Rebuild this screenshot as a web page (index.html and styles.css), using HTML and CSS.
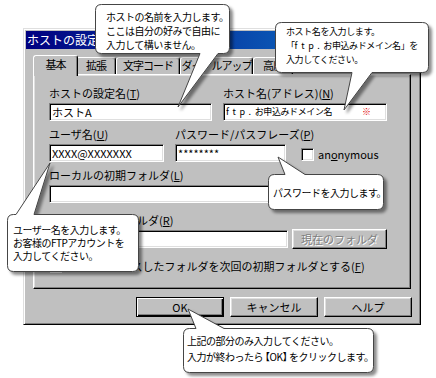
FILE: index.html
```html
<!DOCTYPE html>
<html>
<head>
<meta charset="utf-8">
<link rel="stylesheet" href="styles.css">
</head>
<body>

<div class="dialog">
  <div class="titlebar">ホストの設定</div>
  <div class="tabs">
    <div class="tab active t-basic">基本</div>
    <div class="tab t-ext">拡張</div>
    <div class="tab t-code">文字コード</div>
    <div class="tab t-dial">ダイアルアップ</div>
    <div class="tab t-adv">高度</div>
  </div>
  <div class="panel">
    <div class="row">
      <div class="field host-name">
        <div class="label">ホストの設定名(<u>T</u>)</div>
        <div class="input">ホストA</div>
      </div>
      <div class="field host-addr">
        <div class="label">ホスト名(アドレス)(<u>N</u>)</div>
        <div class="input wide"><span class="latin">ftp.</span>お申込みドメイン名<span class="mark">※</span></div>
      </div>
    </div>
    <div class="row">
      <div class="field user">
        <div class="label">ユーザ名(<u>U</u>)</div>
        <div class="input">XXXX@XXXXXXX</div>
      </div>
      <div class="field pass">
        <div class="label">パスワード/パスフレーズ(<u>P</u>)</div>
        <div class="input">********</div>
      </div>
      <div class="check-item anon"><span class="check"></span>an<u>o</u>nymous</div>
    </div>
    <div class="row row-local">
      <div class="field folder">
        <div class="label">ローカルの初期フォルダ(<u>L</u>)</div>
        <div class="input"></div>
      </div>
    </div>
    <div class="row row-remote">
      <div class="field folder">
        <div class="label">ホストの初期フォルダ(<u>R</u>)</div>
        <div class="input"></div>
      </div>
      <div class="btn disabled">現在のフォルダ</div>
    </div>
    <div class="check-item last-dir"><span class="check"></span>最後にアクセスしたフォルダを次回の初期フォルダとする(<u>F</u>)</div>
  </div>
  <div class="buttons">
    <div class="btn default">OK</div>
    <div class="btn">キャンセル</div>
    <div class="btn">ヘルプ</div>
  </div>
</div>

<!-- balloons drawn over the dialog -->
<svg class="balloons" width="436" height="378" viewBox="0 0 436 378">
  <defs>
    <filter id="shade" x="-10%" y="-10%" width="130%" height="130%">
      <feDropShadow dx="3" dy="3" stdDeviation="1.6" flood-color="#000" flood-opacity="0.45"/>
    </filter>
  </defs>
  <g fill="#fff" stroke="#444" stroke-width="1" filter="url(#shade)">
    <path d="M101.5,4.5 H223.5 Q229.5,4.5 229.5,10.5 V47.5 Q229.5,53.5 223.5,53.5 H218 L178,107 L200,53.5 H101.5 Q95.5,53.5 95.5,47.5 V10.5 Q95.5,4.5 101.5,4.5 Z"/>
    <path d="M281.5,22.5 H422.5 Q428.5,22.5 428.5,28.5 V66.5 Q428.5,72.5 422.5,72.5 H372 L344,110 L352,72.5 H281.5 Q275.5,72.5 275.5,66.5 V28.5 Q275.5,22.5 281.5,22.5 Z"/>
    <path d="M13.5,214.5 H16 L50,163 L34,214.5 H132.5 Q138.5,214.5 138.5,220.5 V265.5 Q138.5,271.5 132.5,271.5 H13.5 Q7.5,271.5 7.5,265.5 V220.5 Q7.5,214.5 13.5,214.5 Z"/>
    <path d="M274.5,174.5 H285 L278,157 L305,174.5 H377.5 Q383.5,174.5 383.5,180.5 V203.5 Q383.5,209.5 377.5,209.5 H274.5 Q268.5,209.5 268.5,203.5 V180.5 Q268.5,174.5 274.5,174.5 Z"/>
    <path d="M189.5,328.5 H196 L188,309 L224,328.5 H367.5 Q373.5,328.5 373.5,334.5 V366.5 Q373.5,372.5 367.5,372.5 H189.5 Q183.5,372.5 183.5,366.5 V334.5 Q183.5,328.5 189.5,328.5 Z"/>
  </g>
</svg>

<div class="note note-name">ホストの名前を入力します。<br>ここは自分の好みで自由に<br>入力して構いません。</div>
<div class="note note-host wide">ホスト名を入力します。<br>「<span class="latin">ftp.</span>お申込みドメイン名」を<br>入力してください。</div>
<div class="note note-user">ユーザー名を入力します。<br>お客様のFTPアカウントを<br>入力してください。</div>
<div class="note note-pass">パスワードを入力します。</div>
<div class="note note-ok">上記の部分のみ入力してください。<br>入力が終わったら<span class="narrow">【OK】</span>をクリックします。</div>

</body>
</html>
```

FILE: styles.css
```css
* {
  box-sizing: border-box;
}

body {
  margin: 0;
  width: 436px;
  height: 378px;
  position: relative;
  overflow: hidden;
  background: #fff;
  color: #000;
  font-family: "Noto Sans CJK JP", "Noto Sans", sans-serif;
  font-size: 11px;
}

u {
  text-decoration: underline;
  text-underline-offset: 1px;
}

/* window */
.dialog {
  margin: 28px 0 0 23px;
  width: 398px;
  height: 297px;
  padding: 2px;
  background: #c0c0c0;
  border: 1px solid;
  border-color: #dfdfdf #000 #000 #dfdfdf;
  box-shadow: inset 1px 1px #fff, inset -1px -1px #808080;
}

.titlebar {
  height: 18px;
  padding-left: 1px;
  line-height: 18px;
  font-size: 12px;
  color: #fff;
  background: linear-gradient(to right, #000080, #1084d0);
}

/* tabs */
.tabs {
  display: flex;
  align-items: flex-end;
  height: 19px;
  margin: 6px 0 0 9px;
  position: relative;
}

.tab {
  height: 17px;
  line-height: 15px;
  text-align: center;
  letter-spacing: -1px;
  border: 1px solid;
  border-bottom: none;
  border-color: #fff #000 transparent #fff;
  border-radius: 3px 3px 0 0;
  box-shadow: inset -1px 0 #808080;
  white-space: nowrap;
}

.tab.active {
  height: 21px;
  margin: 0 -2px -2px;
  line-height: 17px;
  background: #c0c0c0;
  position: relative;
}

.t-basic { width: 45px; }
.t-ext { width: 40px; }
.t-code { width: 64px; }
.t-dial { width: 73px; }
.t-adv { width: 40px; }

.panel {
  height: 215px;
  margin: 0 7px;
  padding: 11px 15px 0;
  border: 1px solid;
  border-color: #fff #000 #000 #fff;
  box-shadow: inset -1px -1px #808080, inset 1px 1px #dfdfdf;
}

/* form rows */
.row {
  display: flex;
  align-items: flex-end;
  gap: 11px;
  margin-bottom: 6px;
}

.row-local {
  margin-bottom: 10px;
}

.row-remote {
  gap: 4px;
}

.label {
  line-height: 14px;
  margin-bottom: 3px;
  white-space: nowrap;
}

.input {
  height: 18px;
  padding-left: 2px;
  line-height: 16px;
  background: #fff;
  white-space: nowrap;
  overflow: hidden;
  border: 1px solid;
  border-color: #808080 #fff #fff #808080;
  box-shadow: inset 1px 1px #000, inset -1px -1px #dfdfdf;
}

.host-name { width: 163px; }
.host-addr { width: 164px; }
.user { width: 115px; }
.pass { width: 111px; }
.folder { width: 239px; }

.wide {
  font-size: 9px;
  letter-spacing: -0.4px;
}

.wide .latin {
  letter-spacing: 3.6px;
}

.mark {
  margin-left: 30px;
  color: #e00000;
}

.check-item {
  display: flex;
  align-items: center;
  height: 14px;
  white-space: nowrap;
}

.check {
  width: 13px;
  height: 13px;
  margin-right: 4px;
  background: #fff;
  border: 1px solid;
  border-color: #808080 #fff #fff #808080;
  box-shadow: inset 1px 1px #000, inset -1px -1px #dfdfdf;
}

.anon {
  margin: 0 0 1px 4px;
}

.last-dir {
  margin-top: 11px;
}

/* push buttons */
.buttons {
  display: flex;
  justify-content: flex-end;
  gap: 6px;
  margin: 8px 6px 0 0;
}

.btn {
  width: 88px;
  height: 20px;
  line-height: 18px;
  text-align: center;
  border: 1px solid;
  border-color: #fff #000 #000 #fff;
  box-shadow: inset -1px -1px #808080, inset 1px 1px #dfdfdf;
  white-space: nowrap;
}

.btn.default {
  border-color: #000;
  box-shadow: inset 1px 1px #fff, inset -1px -1px #000, inset -2px -2px #808080;
}

.btn.disabled {
  width: 95px;
  height: 20px;
  margin-bottom: -1px;
  color: #808080;
  text-shadow: 1px 1px #fff;
}

/* balloons */
.balloons {
  position: absolute;
  left: 0;
  top: 0;
  z-index: 2;
}

.note {
  position: absolute;
  z-index: 3;
  font-size: 10px;
  letter-spacing: -0.5px;
  line-height: 14px;
  white-space: nowrap;
}

.note.wide {
  font-size: 9px;
  letter-spacing: -0.4px;
}

.note .narrow {
  margin: 0 -3px;
}

.note-name { left: 106px; top: 10px; }
.note-host { left: 286px; top: 25px; }
.note-user { left: 13px; top: 223px; line-height: 13px; }
.note-pass { left: 273px; top: 186px; }
.note-ok { left: 187px; top: 333px; line-height: 16px; }
```
